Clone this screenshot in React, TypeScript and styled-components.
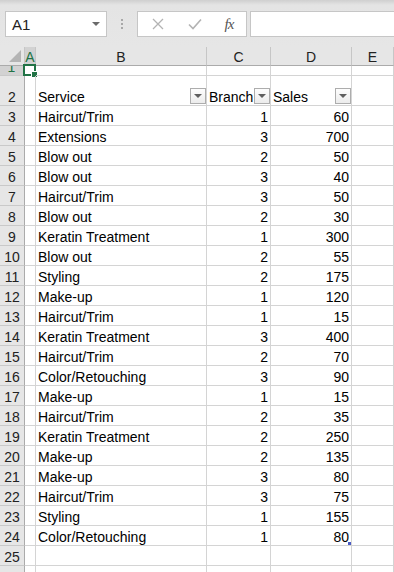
import styled, { createGlobalStyle } from "styled-components";

const Global = createGlobalStyle`
  html, body { margin: 0; padding: 0; background: #fff; }
  body { font-family: "Liberation Sans", Arial, sans-serif; overflow: hidden; }
`;

const Page = styled.div`
  width: 394px; height: 572px; overflow: hidden;
  display: flex; flex-direction: column;
`;

const FormulaBar = styled.div`
  height: 47px; flex: none; box-sizing: border-box;
  padding: 11px 0 0 5px;
  display: flex; align-items: flex-start;
  background: linear-gradient(#cfcfcf 0px, #e4e4e4 5px, #e6e6e6 100%);
`;

const NameBox = styled.div`
  width: 102px; height: 26px; box-sizing: border-box;
  background: #fff; border: 1px solid #c6c6c6;
  display: flex; align-items: center; justify-content: space-between;
  padding: 0 6px 0 6px;
  font-size: 15px; color: #222;
`;

const Caret = styled.span`
  width: 0; height: 0;
  border-left: 4px solid transparent; border-right: 4px solid transparent;
  border-top: 4px solid #6a6a6a;
`;

const Grip = styled.div`
  width: 30px; height: 26px; flex: none;
  display: flex; flex-direction: column; align-items: center; justify-content: center; gap: 2px;
  span { width: 2px; height: 2px; background: #a8a8a8; }
`;

const ButtonBox = styled.div`
  width: 110px; height: 26px; box-sizing: border-box; flex: none;
  background: #fff; border: 1px solid #c6c6c6;
  display: flex; align-items: center;
  padding: 0 0 0 12px; gap: 0;
`;

const ToolIcon = styled.div<{ $w: number; $gap: number }>`
  width: ${({ $w }) => $w}px; margin-left: ${({ $gap }) => $gap}px;
  display: flex; align-items: center; justify-content: center;
`;

const Fx = styled.span`
  font-family: "Liberation Serif", "Times New Roman", serif;
  font-style: italic; font-size: 15px; color: #555;
  letter-spacing: -1px;
`;

const FormulaInput = styled.div`
  flex: 1; height: 26px; margin-left: 3px; box-sizing: border-box;
  background: #fff; border: 1px solid #c6c6c6; border-right: 0;
`;

const Sheet = styled.div`
  display: grid;
  grid-template-columns: 25px 11px 171px 64px 81px 1fr;
  grid-template-rows: 19px 10px 30px repeat(23, 20px) 20px;
  font-size: 14px; color: #000;
`;

const Corner = styled.div`
  background: #e6e6e6; border-right: 1px solid #c6c6c6; border-bottom: 1px solid #ababab;
  box-sizing: border-box; position: relative;
  &::after {
    content: ""; position: absolute; right: 3px; bottom: 3px;
    width: 0; height: 0;
    border-left: 12px solid transparent; border-bottom: 12px solid #b4b4b4;
  }
`;

const ColHead = styled.div<{ $sel?: boolean }>`
  box-sizing: border-box;
  background: ${({ $sel }) => ($sel ? "#d2d2d2" : "#e6e6e6")};
  border-right: 1px solid #c6c6c6;
  border-bottom: ${({ $sel }) => ($sel ? "2px solid #217346" : "1px solid #ababab")};
  color: ${({ $sel }) => ($sel ? "#217346" : "#222")};
  display: flex; align-items: center; justify-content: center;
  font-size: 14px; padding-top: 2px;
`;

const RowHead = styled.div<{ $sel?: boolean }>`
  box-sizing: border-box;
  background: ${({ $sel }) => ($sel ? "#d2d2d2" : "#e6e6e6")};
  border-right: ${({ $sel }) => ($sel ? "2px solid #217346" : "1px solid #ababab")};
  border-bottom: 1px solid #c9c9c9;
  color: ${({ $sel }) => ($sel ? "#217346" : "#222")};
  display: flex; align-items: flex-end; justify-content: center;
  overflow: hidden; line-height: 16px; padding-bottom: 0;
  font-size: 14px;
`;

const Cell = styled.div<{ $num?: boolean }>`
  box-sizing: border-box; position: relative;
  border-right: 1px solid #d4d4d4; border-bottom: 1px solid #d4d4d4;
  display: flex; align-items: flex-end;
  justify-content: ${({ $num }) => ($num ? "flex-end" : "flex-start")};
  padding: 0 2px 0 2px; line-height: 16px;
  white-space: nowrap; overflow: visible;
`;

const HeaderCell = styled(Cell)`
  justify-content: space-between; align-items: flex-end; padding-right: 0; padding-bottom: 0;
`;

const FilterBtn = styled.span`
  width: 16px; height: 16px; box-sizing: border-box; flex: none; margin-bottom: 1px;
  border: 1px solid #adadad; background: linear-gradient(#fdfdfd, #ececec);
  display: flex; align-items: center; justify-content: center;
  &::after {
    content: ""; width: 0; height: 0;
    border-left: 4px solid transparent; border-right: 4px solid transparent;
    border-top: 4px solid #5f5f5f;
  }
`;

const Selection = styled.div`
  position: absolute; left: -2px; top: -2px; right: -1px; bottom: -1px;
  border: 2px solid #217346; pointer-events: none;
  &::after {
    content: ""; position: absolute; right: -4px; bottom: -4px;
    width: 5px; height: 5px; background: #217346; border: 1px solid #fff;
  }
`;

const ResizeHandle = styled.span`
  position: absolute; right: 0; bottom: 0;
  width: 3px; height: 3px; background: #4b5cc4;
`;

const data: [string, number, number][] = [
  ["Haircut/Trim", 1, 60],
  ["Extensions", 3, 700],
  ["Blow out", 2, 50],
  ["Blow out", 3, 40],
  ["Haircut/Trim", 3, 50],
  ["Blow out", 2, 30],
  ["Keratin Treatment", 1, 300],
  ["Blow out", 2, 55],
  ["Styling", 2, 175],
  ["Make-up", 1, 120],
  ["Haircut/Trim", 1, 15],
  ["Keratin Treatment", 3, 400],
  ["Haircut/Trim", 2, 70],
  ["Color/Retouching", 3, 90],
  ["Make-up", 1, 15],
  ["Haircut/Trim", 2, 35],
  ["Keratin Treatment", 2, 250],
  ["Make-up", 2, 135],
  ["Make-up", 3, 80],
  ["Haircut/Trim", 3, 75],
  ["Styling", 1, 155],
  ["Color/Retouching", 1, 80],
];

function CrossIcon() {
  return (
    <svg width="12" height="12" viewBox="0 0 12 12">
      <path d="M1 1 L11 11 M11 1 L1 11" stroke="#b3b3b3" strokeWidth="1.3" fill="none" />
    </svg>
  );
}

function CheckIcon() {
  return (
    <svg width="14" height="12" viewBox="0 0 14 12">
      <path d="M1 6.5 L5 10.5 L13 1.5" stroke="#b3b3b3" strokeWidth="1.6" fill="none" />
    </svg>
  );
}

function RowView({ n, service, branch, sales, last }: { n: number; service: string; branch: number; sales: number; last: boolean }) {
  return (
    <>
      <RowHead>{n}</RowHead>
      <Cell />
      <Cell>{service}</Cell>
      <Cell $num>{branch}</Cell>
      <Cell $num>
        {sales}
        {last && <ResizeHandle />}
      </Cell>
      <Cell />
    </>
  );
}

export default function App() {
  return (
    <Page>
      <Global />
      <FormulaBar>
        <NameBox>
          <span>A1</span>
          <Caret />
        </NameBox>
        <Grip>
          <span /><span /><span />
        </Grip>
        <ButtonBox>
          <ToolIcon $w={16} $gap={0}><CrossIcon /></ToolIcon>
          <ToolIcon $w={22} $gap={18}><CheckIcon /></ToolIcon>
          <ToolIcon $w={22} $gap={12}><Fx>fx</Fx></ToolIcon>
        </ButtonBox>
        <FormulaInput />
      </FormulaBar>

      <Sheet>
        <Corner />
        <ColHead $sel>A</ColHead>
        <ColHead>B</ColHead>
        <ColHead>C</ColHead>
        <ColHead>D</ColHead>
        <ColHead>E</ColHead>

        <RowHead $sel>1</RowHead>
        <Cell><Selection /></Cell>
        <Cell /><Cell /><Cell /><Cell />

        <RowHead>2</RowHead>
        <Cell />
        <HeaderCell>Service<FilterBtn /></HeaderCell>
        <HeaderCell>Branch<FilterBtn /></HeaderCell>
        <HeaderCell>Sales<FilterBtn /></HeaderCell>
        <Cell />

        {data.map(([service, branch, sales], i) => (
          <RowView key={i} n={i + 3} service={service} branch={branch} sales={sales} last={i === data.length - 1} />
        ))}

        <RowHead>25</RowHead>
        <Cell /><Cell /><Cell /><Cell /><Cell />
        <RowHead />
        <Cell /><Cell /><Cell /><Cell /><Cell />
      </Sheet>
    </Page>
  );
}
